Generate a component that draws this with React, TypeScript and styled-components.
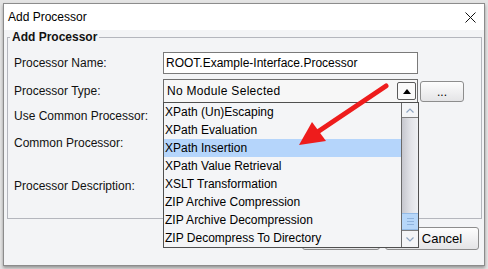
import React from "react";
import styled, { createGlobalStyle } from "styled-components";

const GlobalStyle = createGlobalStyle`
  html, body {
    margin: 0;
    padding: 0;
  }
  body {
    width: 488px;
    height: 269px;
    overflow: hidden;
    background: #e4e4e4;
    font-family: "Liberation Sans", Arial, sans-serif;
  }
`;

const Window = styled.div`
  position: relative;
  box-sizing: border-box;
  width: 482px;
  height: 263px;
  margin: 3px 0 0 3px;
  border: 1px solid #8c8c8c;
  background: #f3f4f6;
  box-shadow: 0 2px 3px rgba(0, 0, 0, 0.35);
  display: flex;
  flex-direction: column;
`;

const TitleBar = styled.div`
  height: 26px;
  flex: none;
  background: #ffffff;
  display: flex;
  align-items: center;
  justify-content: space-between;
  padding-left: 4px;
  font-size: 12px;
  color: #000;
`;

const CloseBox = styled.div`
  width: 28px;
  height: 26px;
  display: flex;
  align-items: center;
  justify-content: center;
`;

const Body = styled.div`
  flex: 1;
  display: flex;
  flex-direction: column;
  padding: 0 2px 0 3px;
`;

const Group = styled.fieldset`
  margin: 0;
  padding: 7px 6px 7px 6px;
  border: 1px solid #b4b6bd;
  min-width: 0;
`;

const Legend = styled.legend`
  font-weight: bold;
  font-size: 12px;
  line-height: 14px;
  padding: 0 2px;
  margin-left: -4px;
  color: #111;
`;

const Row = styled.div<{ $h: number }>`
  display: grid;
  grid-template-columns: 149px auto;
  align-items: center;
  height: ${({ $h }) => $h}px;
`;

const Label = styled.span`
  font-size: 12px;
  color: #111;
  white-space: nowrap;
`;

const Fields = styled.div`
  display: flex;
  align-items: center;
  gap: 2px;
`;

const TextBox = styled.div`
  box-sizing: border-box;
  width: 255px;
  height: 22px;
  border: 1px solid #7a7a7a;
  background: #fff;
  padding-left: 2px;
  font-size: 12px;
  line-height: 20px;
  color: #000;
`;

const Combo = styled.div`
  box-sizing: border-box;
  width: 255px;
  height: 24px;
  border: 1px solid #6e6e6e;
  background: #f7f7f7;
  padding-left: 3px;
  display: flex;
  align-items: center;
  justify-content: space-between;
  font-size: 12px;
  letter-spacing: 0.3px;
  color: #000;
`;

const ArrowButton = styled.div`
  box-sizing: border-box;
  width: 19px;
  height: 18px;
  margin-right: 1px;
  border: 1px solid #5a5a5a;
  border-radius: 2px;
  background: #fafafa;
  display: flex;
  align-items: center;
  justify-content: center;

  &::after {
    content: "";
    border-left: 4px solid transparent;
    border-right: 4px solid transparent;
    border-bottom: 5px solid #000;
  }
`;

const PushButton = styled.div<{ $w: number; $pl?: number }>`
  box-sizing: border-box;
  width: ${({ $w }) => $w}px;
  height: 23px;
  padding-left: ${({ $pl }) => $pl ?? 0}px;
  border: 1px solid #8d8d8d;
  border-radius: 3px;
  background: linear-gradient(#fdfdfd, #e4e4e6);
  display: flex;
  align-items: center;
  justify-content: center;
  font-size: 13px;
  color: #000;
`;

const DotsButton = styled(PushButton)`
  height: 21px;
  font-size: 12px;
  padding-top: 2px;
`;

const ButtonRow = styled.div`
  display: flex;
  justify-content: flex-end;
  gap: 5px;
  margin-top: 8px;
  padding-right: 3px;
`;

const Popup = styled.div`
  position: absolute;
  left: 159px;
  top: 98px;
  box-sizing: border-box;
  width: 256px;
  height: 146px;
  border: 1px solid #505050;
  background: #f4f5f7;
  display: flex;
`;

const Items = styled.div`
  flex: 1;
  display: flex;
  flex-direction: column;
`;

const Item = styled.div<{ $selected?: boolean }>`
  height: 18px;
  line-height: 18px;
  padding-left: 1px;
  font-size: 12px;
  color: #000;
  white-space: nowrap;
  background: ${({ $selected }) => ($selected ? "#b5d5fb" : "transparent")};
`;

const ScrollBar = styled.div`
  width: 17px;
  box-sizing: border-box;
  border-left: 1px solid #6a6a6a;
  display: flex;
  flex-direction: column;
`;

const ScrollArrow = styled.div<{ $down?: boolean }>`
  height: ${({ $down }) => ($down ? 16 : 14)}px;
  flex: none;
  background: #f4f5f7;
  border-${({ $down }) => ($down ? "top" : "bottom")}: 1px solid #7d7d7d;
  display: flex;
  align-items: center;
  justify-content: center;
`;

const Track = styled.div`
  flex: 1;
  background: linear-gradient(to right, #c6c7ce, #e2e3e8 55%, #eef0f3);
`;

const Thumb = styled.div`
  height: 17px;
  box-sizing: border-box;
  flex: none;
  background: #b7d7f9;
  border-top: 1px solid #94bbe6;
  border-bottom: 1px solid #94bbe6;
  display: flex;
  flex-direction: column;
  align-items: center;
  justify-content: center;
  gap: 2px;
`;

const Grip = styled.div`
  width: 7px;
  height: 1px;
  background: #8fb3dd;
`;

const Overlay = styled.svg`
  position: absolute;
  left: 0;
  top: 0;
  pointer-events: none;
`;

const items = [
  "XPath (Un)Escaping",
  "XPath Evaluation",
  "XPath Insertion",
  "XPath Value Retrieval",
  "XSLT Transformation",
  "ZIP Archive Compression",
  "ZIP Archive Decompression",
  "ZIP Decompress To Directory",
];

const Chevron = ({ down }: { down?: boolean }) => (
  <svg width="8" height="5" viewBox="0 0 8 5">
    <polyline
      points={down ? "0.5,0.5 4,4 7.5,0.5" : "0.5,4.5 4,1 7.5,4.5"}
      fill="none"
      stroke="#8ea5c2"
      strokeWidth="1.2"
    />
  </svg>
);

export default function App() {
  return (
    <>
      <GlobalStyle />
      <Window>
        <TitleBar>
          <span>Add Processor</span>
          <CloseBox>
            <svg width="11" height="11" viewBox="0 0 11 11">
              <path d="M0.5 0.5 L10.5 10.5 M10.5 0.5 L0.5 10.5" stroke="#111" strokeWidth="1" />
            </svg>
          </CloseBox>
        </TitleBar>
        <Body>
          <Group>
            <Legend>Add Processor</Legend>
            <Row $h={24}>
              <Label>Processor Name:</Label>
              <TextBox>ROOT.Example-Interface.Processor</TextBox>
            </Row>
            <Row $h={32}>
              <Label>Processor Type:</Label>
              <Fields>
                <Combo>
                  No Module Selected
                  <ArrowButton />
                </Combo>
                <DotsButton $w={44}>...</DotsButton>
              </Fields>
            </Row>
            <Row $h={18}>
              <Label>Use Common Processor:</Label>
            </Row>
            <Row $h={36}>
              <Label>Common Processor:</Label>
            </Row>
            <Row $h={50}>
              <Label>Processor Description:</Label>
            </Row>
          </Group>
          <ButtonRow>
            <PushButton $w={78}>OK</PushButton>
            <PushButton $w={94} $pl={20}>Cancel</PushButton>
          </ButtonRow>
        </Body>

        <Popup>
          <Items>
            {items.map((t, i) => (
              <Item key={t} $selected={i === 2}>
                {t}
              </Item>
            ))}
          </Items>
          <ScrollBar>
            <ScrollArrow>
              <Chevron />
            </ScrollArrow>
            <Track />
            <Thumb>
              <Grip />
              <Grip />
              <Grip />
            </Thumb>
            <ScrollArrow $down>
              <Chevron down />
            </ScrollArrow>
          </ScrollBar>
        </Popup>

        <Overlay width="480" height="261" viewBox="4 4 480 261">
          <line x1="386" y1="86" x2="316" y2="133" stroke="#ee1c1c" strokeWidth="5" strokeLinecap="round" />
          <polygon points="299,145 312,122 326,141" fill="#ee1c1c" />
        </Overlay>
      </Window>
    </>
  );
}
